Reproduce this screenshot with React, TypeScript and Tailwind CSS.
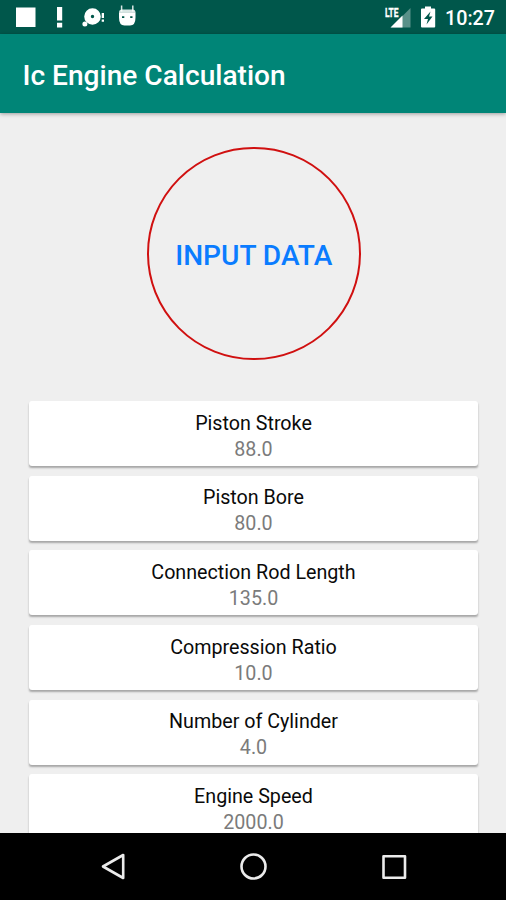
import React from 'react';

const engineInputs = [
  { label: 'Piston Stroke', value: '88.0' },
  { label: 'Piston Bore', value: '80.0' },
  { label: 'Connection Rod Length', value: '135.0' },
  { label: 'Compression Ratio', value: '10.0' },
  { label: 'Number of Cylinder', value: '4.0' },
  { label: 'Engine Speed', value: '2000.0' },
];

const StatusBar: React.FC = () => (
  <div className="flex h-[34px] shrink-0 items-center justify-between bg-[#00574b] pr-[11px] text-white">
    <svg width="150" height="34" fill="currentColor">
      <rect x="16" y="7.5" width="19.5" height="19.5" />
      <path d="M57 7h5.200v13.500h-5.200zM57 22.800h5.200v4.700h-5.200z" />
      {/* disc with an alert mark */}
      <path
        fillRule="evenodd"
        d="M92.500 8.300a8.300 8.200 0 1 1 0 16.400a8.300 8.200 0 0 1 0-16.400zM92.500 14.800a1.700 1.700 0 1 0 0 3.400a1.700 1.700 0 0 0 0-3.400z"
      />
      <circle cx="84.900" cy="24" r="2.500" />
      <path d="M101.700 13h2.300v5h-2.300zM101.700 19.500h2.300v2.300h-2.300z" />
      {/* android head */}
      <path
        fillRule="evenodd"
        d="M119 12.500h16.500v5q0 8-5.500 8h-5.500q-5.500 0-5.500-8zM122 16.300v1.600h2.300v-1.600zM130.200 16.300v1.600h2.300v-1.600z"
      />
      <path d="M121.600 5.500v6M132.800 5.500v6" stroke="currentColor" strokeWidth="1.500" opacity="0.850" />
      <path d="M119 12.700q0-3.200 3-3.200h10.500q3 0 3 3.200z" opacity="0.850" />
    </svg>
    <div className="flex items-center">
      <svg width="62" height="34" fill="currentColor">
        <path d="M27.500 8v19.500H8z" opacity="0.350" />
        <path d="M19.500 15.500v12H7.500z" />
        <text
          x="2"
          y="16.500"
          fontSize="12"
          fontWeight="700"
          textLength="13.500"
          lengthAdjust="spacingAndGlyphs"
          stroke="currentColor"
          strokeWidth="0.300"
        >
          LTE
        </text>
        <path
          fillRule="evenodd"
          d="M42 6.500h6v2h3.200q1 0 1 1v17q0 1-1 1H39q-1 0-1-1v-17q0-1 1-1h3zM47.500 11.500l-6.500 7.500h4l-1.500 5.500 6-8h-3.500z"
        />
      </svg>
      <span className="pt-[3px] text-[19.7px] leading-none font-medium">10:27</span>
    </div>
  </div>
);

const InputCard: React.FC<{ label: string; value: string }> = ({ label, value }) => (
  <div className="flex h-[65px] shrink-0 flex-col items-center rounded-[3px] bg-white pt-[8.6px] pl-[1px] text-[19.7px] shadow-[0_2px_2px_-0.5px_rgba(0,0,0,0.3)]">
    <span className="leading-[27px] text-[#0a0a0a]">{label}</span>
    <span className="leading-[25px] text-[#7b7b7b]">{value}</span>
  </div>
);

const NavBar: React.FC = () => (
  <div className="flex h-[67px] shrink-0 items-center justify-center bg-black">
    <svg width="506" height="67" fill="none" stroke="#ebebeb" strokeWidth="2.600" strokeLinejoin="round">
      <path d="M123.200 22v23L103 33.500z" />
      <circle cx="253.500" cy="33.500" r="12" />
      <rect x="383.500" y="23.300" width="21.500" height="21.500" />
    </svg>
  </div>
);

export default function App() {
  return (
    <div className="flex h-[900px] w-[506px] flex-col overflow-hidden bg-[#efefef] font-[Roboto,sans-serif]">
      <StatusBar />
      <header className="z-10 flex h-[78.5px] shrink-0 items-center bg-[#008577] pt-[5px] pl-[22.5px] shadow-[0_1px_4px_rgba(0,0,0,0.35)]">
        <h1 className="text-[28.1px] leading-none font-medium text-white">Ic Engine Calculation</h1>
      </header>
      <main className="flex min-h-0 flex-1 flex-col overflow-hidden">
        <button className="mt-[34px] ml-[1.5px] flex size-[213.5px] shrink-0 items-center justify-center self-center rounded-full border-2 border-[#d01010] pt-[5px] text-[28.1px] leading-none font-medium text-[#0a7cff]">
          INPUT DATA
        </button>
        <div className="mt-[41.2px] flex flex-col gap-[9.6px] px-[28.5px]">
          {engineInputs.map((input) => (
            <InputCard key={input.label} label={input.label} value={input.value} />
          ))}
        </div>
      </main>
      <NavBar />
    </div>
  );
}
